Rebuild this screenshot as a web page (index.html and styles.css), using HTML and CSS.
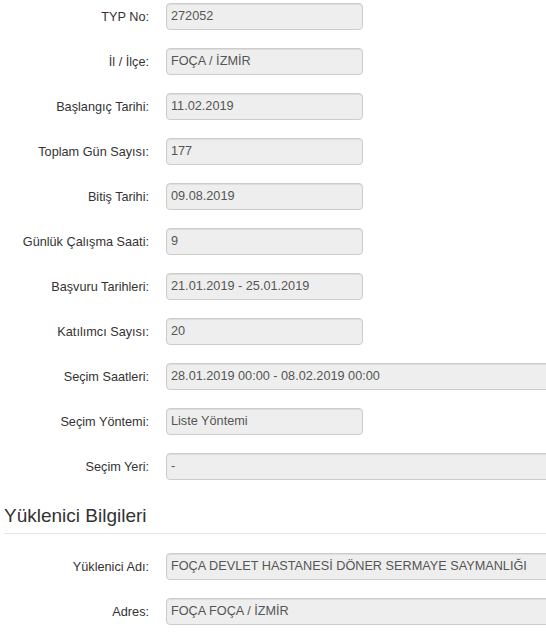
FILE: index.html
```html
<!doctype html>
<html lang="tr">
<head>
    <meta charset="UTF-8">
    <meta name="viewport" content="width=device-width, initial-scale=1.0">
    <title>Program Bilgileri</title>
    <link rel="stylesheet" href="styles.css">
</head>
<body>
<div class="page">
    <div class="form">
        <div class="row">
            <label class="label">TYP No:</label>
            <div class="field">272052</div>
        </div>
        <div class="row">
            <label class="label">İl / İlçe:</label>
            <div class="field">FOÇA / İZMİR</div>
        </div>
        <div class="row">
            <label class="label">Başlangıç Tarihi:</label>
            <div class="field">11.02.2019</div>
        </div>
        <div class="row">
            <label class="label">Toplam Gün Sayısı:</label>
            <div class="field">177</div>
        </div>
        <div class="row">
            <label class="label">Bitiş Tarihi:</label>
            <div class="field">09.08.2019</div>
        </div>
        <div class="row">
            <label class="label">Günlük Çalışma Saati:</label>
            <div class="field">9</div>
        </div>
        <div class="row">
            <label class="label">Başvuru Tarihleri:</label>
            <div class="field">21.01.2019 - 25.01.2019</div>
        </div>
        <div class="row">
            <label class="label">Katılımcı Sayısı:</label>
            <div class="field">20</div>
        </div>
        <div class="row">
            <label class="label">Seçim Saatleri:</label>
            <div class="field wide">28.01.2019 00:00 - 08.02.2019 00:00</div>
        </div>
        <div class="row">
            <label class="label">Seçim Yöntemi:</label>
            <div class="field">Liste Yöntemi</div>
        </div>
        <div class="row">
            <label class="label">Seçim Yeri:</label>
            <div class="field wide">-</div>
        </div>
    </div>

    <!-- Yüklenici -->
    <h3 class="section-title">Yüklenici Bilgileri</h3>
    <div class="form">
        <div class="row">
            <label class="label">Yüklenici Adı:</label>
            <div class="field wide">FOÇA DEVLET HASTANESİ DÖNER SERMAYE SAYMANLIĞI</div>
        </div>
        <div class="row">
            <label class="label">Adres:</label>
            <div class="field wide">FOÇA FOÇA / İZMİR</div>
        </div>
    </div>
</div>
</body>
</html>
```

FILE: styles.css
```css
body {
    margin: 0;
    font-family: "Liberation Sans", Arial, sans-serif;
    font-size: 12.7px;
    color: #333;
    background: #fff;
}

.page {
    overflow: hidden;
    padding-top: 3px;
}

.row {
    display: flex;
    align-items: center;
    gap: 17px;
    margin-bottom: 18px;
}

.label {
    width: 149px;
    flex: none;
    text-align: right;
}

/* Read-only input look (bootstrap style) */
.field {
    box-sizing: border-box;
    flex: none;
    width: 197px;
    height: 27px;
    line-height: 25px;
    padding: 0 4px;
    color: #555;
    background-color: #eee;
    border: 1px solid #ccc;
    border-radius: 4px;
    box-shadow: inset 0 1px 1px rgba(0, 0, 0, 0.075);
    white-space: nowrap;
}

.field.wide {
    width: 420px;
}

.section-title {
    margin: 25px 0 19px 4px;
    padding-bottom: 6px;
    border-bottom: 1px solid #e5e5e5;
    font-size: 19px;
    font-weight: normal;
    line-height: 22px;
    color: #333;
}
```
